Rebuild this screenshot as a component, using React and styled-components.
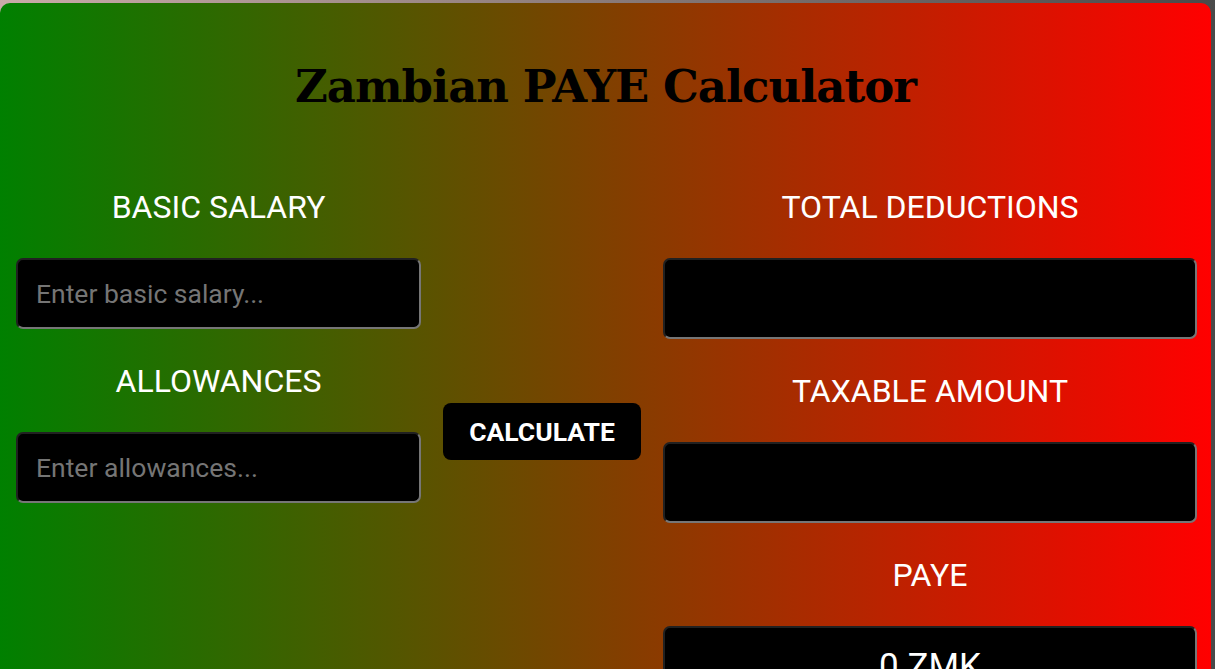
import React, { useState } from 'react'
import styled, { createGlobalStyle } from 'styled-components'

const GlobalStyle = createGlobalStyle`
  html, body {
    margin: 0;
    padding: 0;
  }
  body {
    padding: 3px 4px 0 0;
    background: linear-gradient(to right, #c9aba8, #4a4a4a);
    font-family: Roboto, "Liberation Sans", sans-serif;
    overflow: hidden;
  }
`

const Card = styled.div`
  background: linear-gradient(to right, #008000, #ff0000);
  border-radius: 10px 10px 0 0;
  padding: 57px 16px 40px;
  min-height: 700px;
  box-sizing: border-box;
`

const Title = styled.h1`
  margin: 0 0 76px;
  text-align: center;
  font-family: "DejaVu Serif", "Liberation Serif", serif;
  font-size: 45px;
  font-weight: bold;
  letter-spacing: -1px;
  color: #000;
`

const Row = styled.div`
  display: flex;
  align-items: flex-start;
  gap: 22px;
`

const Column = styled.div`
  display: flex;
  flex-direction: column;
  width: ${(p) => p.width}px;
  flex-shrink: 0;
`

const Group = styled.div`
  display: flex;
  flex-direction: column;
  margin-bottom: 34px;
`

const Label = styled.label`
  display: block;
  margin-bottom: 32px;
  text-align: center;
  color: #fff;
  font-size: 32px;
  line-height: 37px;
  text-transform: uppercase;
`

const Field = styled.input`
  box-sizing: border-box;
  width: 100%;
  height: ${(p) => (p.tall ? 81 : 71)}px;
  padding: 0 18px;
  border: 2px inset rgb(118, 118, 118);
  border-radius: 7px;
  background: #000;
  color: #fff;
  font-family: Roboto, "Liberation Sans", sans-serif;
  font-size: ${(p) => (p.tall ? 35 : 26.5)}px;
  text-align: ${(p) => (p.tall ? 'center' : 'left')};
  outline: none;
  &::placeholder {
    color: #757575;
  }
`

const Middle = styled.div`
  display: flex;
  justify-content: center;
  width: 198px;
  flex-shrink: 0;
  padding-top: 214px;
`

const CalcButton = styled.button`
  width: 198px;
  height: 57px;
  border: none;
  border-radius: 8px;
  background: #000;
  color: #fff;
  font-family: Roboto, "Liberation Sans", sans-serif;
  font-size: 26.5px;
  font-weight: bold;
  cursor: pointer;
`

const App = () => {
  const [salary, setSalary] = useState('')
  const [allowances, setAllowances] = useState('')
  return (
    <>
      <GlobalStyle />
      <Card>
        <Title>Zambian PAYE Calculator</Title>
        <Row>
          <Column width={405}>
            <Group>
              <Label>Basic Salary</Label>
              <Field placeholder="Enter basic salary..." value={salary} onChange={(e) => setSalary(e.target.value)} />
            </Group>
            <Group>
              <Label>Allowances</Label>
              <Field placeholder="Enter allowances..." value={allowances} onChange={(e) => setAllowances(e.target.value)} />
            </Group>
          </Column>
          <Middle>
            <CalcButton>CALCULATE</CalcButton>
          </Middle>
          <Column width={534}>
            <Group>
              <Label>Total Deductions</Label>
              <Field tall readOnly value="" />
            </Group>
            <Group>
              <Label>Taxable Amount</Label>
              <Field tall readOnly value="" />
            </Group>
            <Group>
              <Label>PAYE</Label>
              <Field tall readOnly value="0 ZMK" />
            </Group>
          </Column>
        </Row>
      </Card>
    </>
  )
}

export default App
